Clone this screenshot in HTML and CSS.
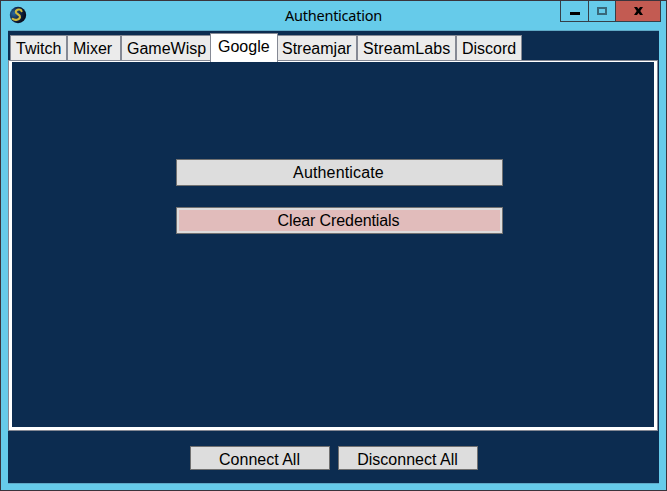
FILE: index.html
```html
<!DOCTYPE html>
<html lang="en">
<head>
<meta charset="utf-8">
<title>Authentication</title>
<link rel="stylesheet" href="styles.css">
</head>
<body>
<div class="window">
  <header class="titlebar">
    <svg class="logo" width="18" height="18" viewBox="0 0 18 18">
      <defs><radialGradient id="orb" cx=".25" cy=".4" r=".7"><stop offset="0" stop-color="#2868a0"/><stop offset=".5" stop-color="#142c50"/><stop offset="1" stop-color="#080c1c"/></radialGradient></defs>
      <circle cx="9" cy="9" r="8.2" fill="url(#orb)"/>
      <path d="M12.6 5.2C12 2.8 7.2 3 6.8 5.8C6.5 8.3 11.5 8.2 11 11C10.5 13.8 6 14.7 3.6 12.8" fill="none" stroke="#d0b83c" stroke-width="2.1" stroke-linecap="round"/>
    </svg>
    <h1 class="title">Authentication</h1>
    <div class="controls">
      <button class="control minimize" aria-label="Minimize"><svg width="10" height="3"><path d="M0 0h10v3H0z"/></svg></button>
      <button class="control maximize" aria-label="Maximize"><svg width="10" height="8"><path d="M1 1h8v6H1z" fill="none" stroke="#38687a" stroke-width="2"/></svg></button>
      <button class="control close" aria-label="Close"><svg width="9" height="8" viewBox="0 0 9 8"><path d="M0 0h3l1.5 2L6 0h3L6.3 4 9 8H6L4.5 6 3 8H0l2.7-4z"/></svg></button>
    </div>
  </header>
  <main class="content">
    <nav class="tabs">
      <button class="tab twitch">Twitch</button>
      <button class="tab mixer">Mixer</button>
      <button class="tab gamewisp">GameWisp</button>
      <button class="tab google active">Google</button>
      <button class="tab streamjar">Streamjar</button>
      <button class="tab streamlabs">StreamLabs</button>
      <button class="tab discord">Discord</button>
    </nav>
    <section class="panel">
      <button class="btn wide primary">Authenticate</button>
      <button class="btn wide danger">Clear Credentials</button>
    </section>
    <footer class="actions">
      <button class="btn">Connect All</button>
      <button class="btn">Disconnect All</button>
    </footer>
  </main>
</div>
</body>
</html>
```
FILE: styles.css
```css
* { box-sizing: border-box; }
body { margin: 0; font: 16px/20px "Liberation Sans", Arial, sans-serif; color: #000; }
button { font: inherit; color: inherit; margin: 0; padding: 0; border-radius: 0; white-space: nowrap; }
svg { display: block; }
.window {
  width: 667px; height: 491px; display: flex; flex-direction: column;
  background: #66cbea; border: 1px solid #3a343c; padding: 0 7px 6px;
}
.titlebar { height: 29px; flex: none; display: grid; grid-template-columns: 102px 1fr 102px; align-items: start; }
.logo { margin: 5px 0 0 1px; }
.title {
  margin: 3px 0 0; font: 14.5px/22px "Noto Sans", "Open Sans", sans-serif;
  text-align: center; letter-spacing: -.25px;
}
.controls { display: flex; height: 21px; border: 1px solid #353f48; border-top: 0; margin: 0 -2px 0 3px; }
.control { border: 0; background: none; display: flex; justify-content: center; height: 20px; }
.minimize { width: 27px; padding-top: 11px; }
.maximize { width: 27px; padding-top: 6px; border-left: 1px solid #353f48; }
.close { width: 45px; padding-top: 6px; background: #c35b52; border-left: 1px solid #353f48; }
.content {
  flex: 1; background: #0c2c50; border-top: 1px solid #5fa9c6; border-bottom: 1px solid #5fa9c6;
  display: flex; flex-direction: column;
}
.tabs { height: 29px; flex: none; padding-left: 2px; display: flex; align-items: flex-end; }
.tab {
  height: 25px; border: 1px solid #858994; border-bottom: 0; background: #ebebeb;
  text-align: left; padding: 2px 0 0 5px; flex: none;
}
.twitch { width: 57px; }
.mixer { width: 54px; }
.gamewisp { width: 89px; border-right: 0; }
.streamjar { width: 79px; border-left: 0; padding-left: 4px; }
.streamlabs { width: 99px; letter-spacing: .1px; }
.discord { width: 66px; }
.google { width: 68px; }
.active { height: 29px; margin-bottom: -2px; background: #fff; padding: 0 0 2px 7px; position: relative; }
.panel {
  height: 371px; width: 650px; flex: none; border: 1px solid #858994;
  box-shadow: inset 3px 0 #fff, inset -3px 0 #fff, inset 0 1px #fff, inset 0 -3px #fff;
  padding: 98px 0 0 13px; display: flex; flex-direction: column; align-items: center; gap: 21px;
}
.btn { width: 140px; height: 24px; background: #ddd; border: 1px solid #707070; line-height: 22px; padding-top: 2px; }
.wide { width: 327px; height: 27px; padding: 0; }
.primary { letter-spacing: .15px; padding-right: 2px; }
.danger { background: #e1bcbb; box-shadow: inset 0 0 0 2px #dedcdc; letter-spacing: -.1px; padding-right: 2px; }
.actions { display: flex; justify-content: center; gap: 8px; padding-top: 15px; }
```
